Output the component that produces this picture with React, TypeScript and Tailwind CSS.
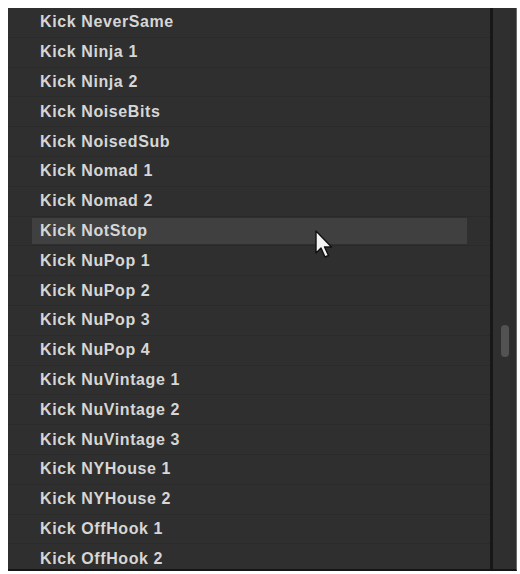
const items = [
  'Kick NeverSame',
  'Kick Ninja 1',
  'Kick Ninja 2',
  'Kick NoiseBits',
  'Kick NoisedSub',
  'Kick Nomad 1',
  'Kick Nomad 2',
  'Kick NotStop',
  'Kick NuPop 1',
  'Kick NuPop 2',
  'Kick NuPop 3',
  'Kick NuPop 4',
  'Kick NuVintage 1',
  'Kick NuVintage 2',
  'Kick NuVintage 3',
  'Kick NYHouse 1',
  'Kick NYHouse 2',
  'Kick OffHook 1',
  'Kick OffHook 2',
];

function Cursor() {
  return (
    <svg
      className="absolute left-[306px] top-[222px]"
      width="22"
      height="30"
      viewBox="0 0 22 30"
    >
      <path
        d="M2 1 L2 23 L7 18 L11 27 L14.5 25.5 L10.5 17 L17.5 17 Z"
        fill="#f4f4f4"
        stroke="#111"
        strokeWidth="1.4"
        strokeLinejoin="round"
      />
    </svg>
  );
}

export default function App() {
  return (
    <div className="w-[520px] h-[574px] bg-white pt-[8px] pl-[8px] pr-[3px] pb-[3px] overflow-hidden">
      <div className="relative h-full flex bg-[#2f2f2f] border-b-[2px] border-b-[#161616] border-r border-r-[#6a6a6a] overflow-hidden">
        <div className="flex-1 flex flex-col">
          {items.map((name) => {
            const active = name === 'Kick NotStop';
            return (
              <div
                key={name}
                className="h-[29.8px] shrink-0 flex items-center border-b border-b-[#2a2a2a] pr-[23px]"
              >
                <div
                  className={
                    active
                      ? 'h-[26px] flex-1 flex items-center ml-[24px] pl-[8px] bg-[#404040]'
                      : 'h-[26px] flex-1 flex items-center ml-[24px] pl-[8px]'
                  }
                >
                  <span
                    className="text-[16px] font-bold text-[#d6d6d6] tracking-[0.6px]"
                    style={{ fontFamily: '"Liberation Sans", Arial, sans-serif' }}
                  >
                    {name}
                  </span>
                </div>
              </div>
            );
          })}
        </div>
        <div className="w-[3px] bg-[#171717]" />
        <div className="w-[23px] flex flex-col pt-[317px] items-center">
          <div className="w-[8px] h-[32px] rounded-full bg-[#525252]" />
        </div>
        <Cursor />
      </div>
    </div>
  );
}
